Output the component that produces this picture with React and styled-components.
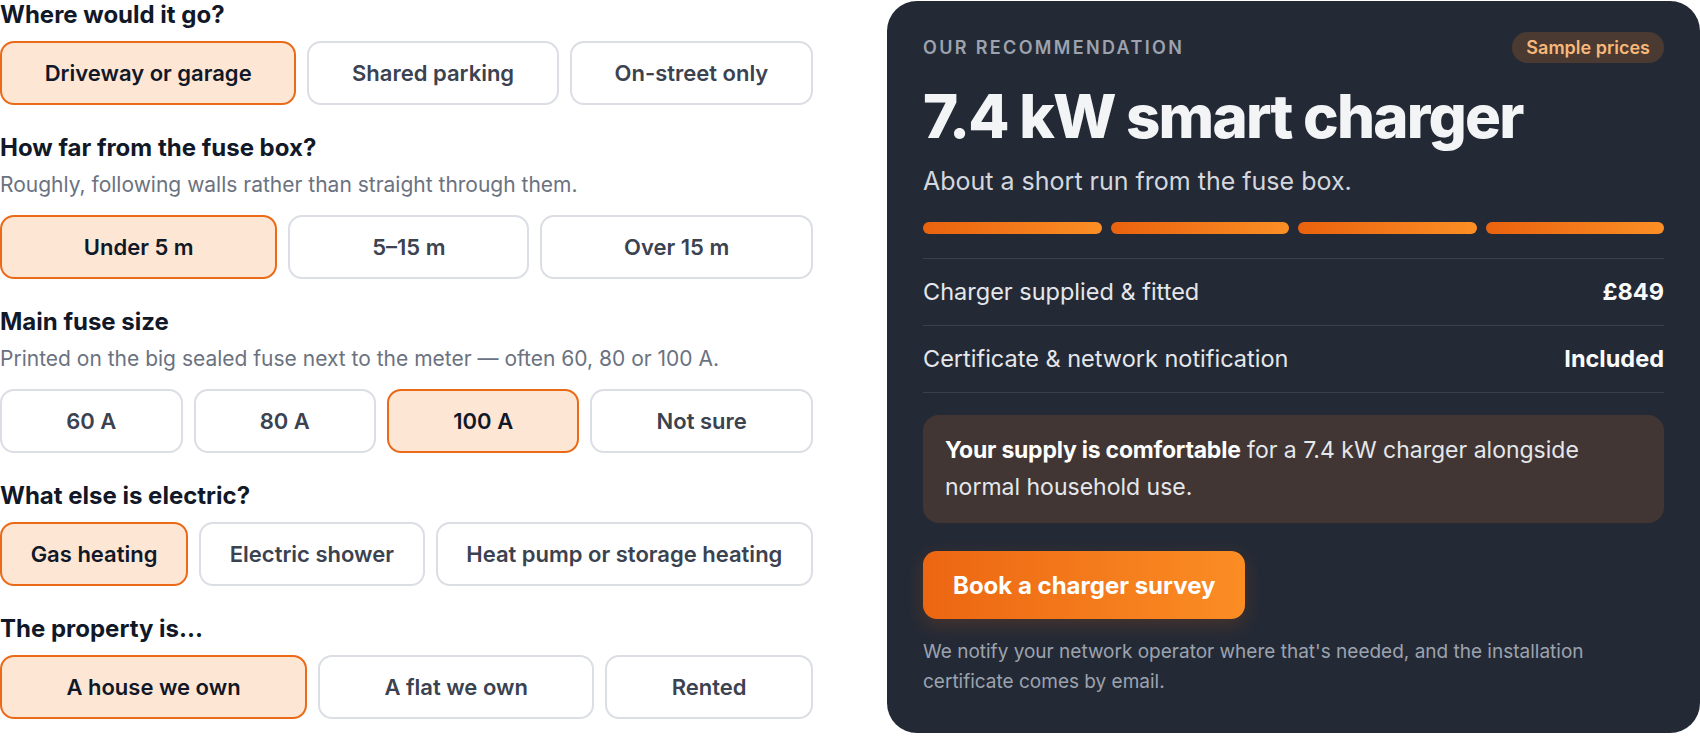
import React, { useState } from 'react';
import styled, { createGlobalStyle } from 'styled-components';

const GlobalStyle = createGlobalStyle`
  body {
    margin: 0;
    background: #ffffff;
    font-family: "Inter", "Liberation Sans", sans-serif;
    color: #111827;
  }
  * {
    box-sizing: border-box;
  }
`;

const Page = styled.div`
  display: grid;
  grid-template-columns: 1fr 1fr;
  column-gap: 74px;
  align-items: start;
  padding-top: 1px;
`;

const Form = styled.div`
  display: flex;
  flex-direction: column;
  gap: 29px;
`;

const Field = styled.div`
  display: flex;
  flex-direction: column;
`;

const Question = styled.h3`
  margin: 0 0 ${(p) => (p.$hasHint ? '9px' : '12px')};
  font-size: 24px;
  line-height: 28px;
  font-weight: 700;
  color: #111827;
`;

const Hint = styled.p`
  margin: 0 0 16px;
  font-size: 21px;
  line-height: 28px;
  color: #6b7280;
`;

const Options = styled.div`
  display: flex;
  gap: 11px;
`;

const Option = styled.button`
  flex: 1 1 auto;
  height: 64px;
  padding: 0 20px;
  border-radius: 14px;
  border: 2px solid ${(p) => (p.$selected ? '#ea6a17' : '#dcdee5')};
  background: ${(p) => (p.$selected ? '#fde6d4' : '#ffffff')};
  color: ${(p) => (p.$selected ? '#111827' : '#3b4250')};
  font-family: inherit;
  font-size: 22px;
  font-weight: 600;
  white-space: nowrap;
  cursor: pointer;
`;

const Card = styled.aside`
  background: #242a35;
  border-radius: 30px;
  padding: 30px 36px 36px;
  color: #f3f4f6;
`;

const CardHead = styled.div`
  display: flex;
  align-items: center;
  justify-content: space-between;
  height: 32px;
`;

const Eyebrow = styled.span`
  font-size: 18px;
  font-weight: 600;
  letter-spacing: 0.13em;
  text-transform: uppercase;
  color: #9ca3af;
`;

const Badge = styled.span`
  display: inline-flex;
  align-items: center;
  height: 31px;
  padding: 0 14px;
  border-radius: 999px;
  background: #4a3a31;
  color: #f8b87a;
  font-size: 18px;
  font-weight: 600;
`;

const Title = styled.h1`
  margin: 20px 0 0;
  font-size: 60px;
  line-height: 66px;
  font-weight: 800;
  letter-spacing: -0.03em;
  color: #f3f4f6;
`;

const Lead = styled.p`
  margin: 17px 0 0;
  font-size: 25px;
  line-height: 30px;
  font-weight: 400;
  color: #d4d7dd;
`;

const Meter = styled.div`
  display: grid;
  grid-template-columns: repeat(4, 1fr);
  gap: 9px;
  margin-top: 26px;
`;

const Segment = styled.div`
  height: 12px;
  border-radius: 6px;
  background: ${(p) =>
    p.$on ? 'linear-gradient(90deg, #ea620e, #fb8f25)' : '#3a414d'};
`;

const Lines = styled.div`
  margin-top: 24px;
  border-top: 1px solid #3a414c;
`;

const Line = styled.div`
  display: flex;
  justify-content: space-between;
  align-items: center;
  padding: 20px 0;
  line-height: 26px;
  font-size: 23.5px;
  border-bottom: 1px solid #3a414c;
`;

const LineLabel = styled.span`
  color: #e5e7eb;
`;

const LineValue = styled.span`
  font-weight: 700;
  color: #f9fafb;
`;

const Note = styled.div`
  margin-top: 22px;
  padding: 17px 60px 17px 22px;
  border-radius: 16px;
  background: #413634;
  font-size: 23px;
  line-height: 37px;
  color: #e5e7eb;

  strong {
    font-weight: 700;
    letter-spacing: -0.01em;
    color: #ffffff;
  }
`;

const Cta = styled.button`
  margin-top: 28px;
  height: 68px;
  padding: 0 30px;
  border: none;
  border-radius: 14px;
  background: linear-gradient(90deg, #ec6612, #fb8d24);
  box-shadow: 0 6px 18px rgba(234, 98, 14, 0.18);
  color: #ffffff;
  font-family: inherit;
  font-size: 24px;
  font-weight: 700;
  cursor: pointer;
`;

const Small = styled.p`
  margin: 18px 0 0;
  font-size: 19px;
  line-height: 30px;
  color: #9ca3af;
`;

const questions = [
  {
    id: 'location',
    label: 'Where would it go?',
    options: ['Driveway or garage', 'Shared parking', 'On-street only'],
  },
  {
    id: 'distance',
    label: 'How far from the fuse box?',
    hint: 'Roughly, following walls rather than straight through them.',
    options: ['Under 5 m', '5–15 m', 'Over 15 m'],
  },
  {
    id: 'fuse',
    label: 'Main fuse size',
    hint: 'Printed on the big sealed fuse next to the meter — often 60, 80 or 100 A.',
    options: ['60 A', '80 A', '100 A', 'Not sure'],
  },
  {
    id: 'load',
    label: 'What else is electric?',
    options: ['Gas heating', 'Electric shower', 'Heat pump or storage heating'],
  },
  {
    id: 'property',
    label: 'The property is...',
    options: ['A house we own', 'A flat we own', 'Rented'],
  },
];

const App = () => {
  const [answers, setAnswers] = useState({
    location: 'Driveway or garage',
    distance: 'Under 5 m',
    fuse: '100 A',
    load: 'Gas heating',
    property: 'A house we own',
  });

  const pick = (id, value) => setAnswers({ ...answers, [id]: value });

  return (
    <>
      <GlobalStyle />
      <Page>
        <Form>
          {questions.map((q) => (
            <Field key={q.id}>
              <Question $hasHint={!!q.hint}>{q.label}</Question>
              {q.hint && <Hint>{q.hint}</Hint>}
              <Options>
                {q.options.map((o) => (
                  <Option
                    key={o}
                    $selected={answers[q.id] === o}
                    onClick={() => pick(q.id, o)}
                  >
                    {o}
                  </Option>
                ))}
              </Options>
            </Field>
          ))}
        </Form>

        <Card>
          <CardHead>
            <Eyebrow>Our recommendation</Eyebrow>
            <Badge>Sample prices</Badge>
          </CardHead>
          <Title>7.4 kW smart charger</Title>
          <Lead>About a short run from the fuse box.</Lead>
          <Meter>
            {[1, 2, 3, 4].map((n) => (
              <Segment key={n} $on />
            ))}
          </Meter>
          <Lines>
            <Line>
              <LineLabel>Charger supplied &amp; fitted</LineLabel>
              <LineValue>£849</LineValue>
            </Line>
            <Line>
              <LineLabel>Certificate &amp; network notification</LineLabel>
              <LineValue>Included</LineValue>
            </Line>
          </Lines>
          <Note>
            <strong>Your supply is comfortable</strong> for a 7.4 kW charger
            alongside normal household use.
          </Note>
          <Cta>Book a charger survey</Cta>
          <Small>
            We notify your network operator where that's needed, and the
            installation certificate comes by email.
          </Small>
        </Card>
      </Page>
    </>
  );
};

export default App;
